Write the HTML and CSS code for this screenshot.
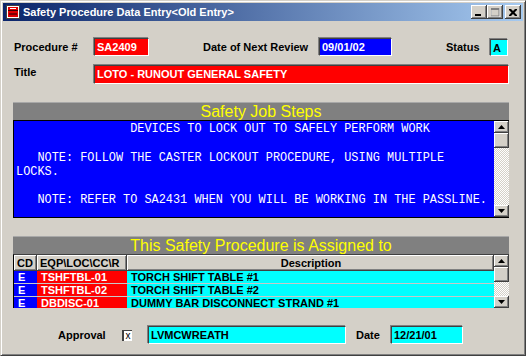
FILE: index.html
```html
<!DOCTYPE html>
<html lang="en">
<head>
  <meta charset="UTF-8">
  <title>Safety Procedure Data Entry</title>
  <link rel="stylesheet" href="styles.css">
</head>
<body>
  <div class="window">
    <div class="titlebar">
      <span class="app-icon">
        <svg width="14" height="14" viewBox="0 0 14 14">
          <rect x="0.5" y="0.5" width="13" height="13" fill="#fff" stroke="#404040"/>
          <rect x="2" y="2" width="10" height="10" fill="#e00000"/>
          <rect x="2" y="5" width="10" height="1" fill="#400000"/>
          <rect x="4" y="3" width="6" height="1" fill="#fff"/>
          <rect x="3" y="8" width="8" height="2" fill="#800000"/>
        </svg>
      </span>
      <span class="title">Safety Procedure Data Entry&lt;Old Entry&gt;</span>
      <div class="controls">
        <button class="ctl">
          <svg width="8" height="7" viewBox="0 0 8 7"><rect x="0" y="5" width="6" height="2" fill="#000"/></svg>
        </button>
        <button class="ctl disabled">
          <svg width="9" height="9" viewBox="0 0 9 9"><rect x="0.5" y="0.5" width="8" height="8" fill="none" stroke="#fff"/><rect x="0" y="0" width="8" height="8" fill="none" stroke="#808080"/><rect x="0" y="0" width="8" height="2" fill="#808080"/></svg>
        </button>
        <button class="ctl close">
          <svg width="8" height="7" viewBox="0 0 8 7"><path d="M0 0h2l2 2 2-2h2v1l-2.5 2.5 2.5 2.5v1h-2l-2-2-2 2h-2v-1l2.5-2.5-2.5-2.5z" fill="#000"/></svg>
        </button>
      </div>
    </div>

    <div class="client">
      <div class="row row-top">
        <span class="lbl lbl-proc">Procedure #</span>
        <div class="field red f-proc">SA2409</div>
        <span class="lbl lbl-date">Date of Next Review</span>
        <div class="field blue f-date">09/01/02</div>
        <span class="lbl lbl-status">Status</span>
        <div class="field cyan f-status">A</div>
      </div>

      <div class="row row-title">
        <span class="lbl lbl-proc">Title</span>
        <div class="field red f-title">LOTO - RUNOUT GENERAL SAFETY</div>
      </div>

      <div class="section">
        <div class="sec-head">Safety Job Steps</div>
        <div class="memo">
<pre class="memo-text">                DEVICES TO LOCK OUT TO SAFELY PERFORM WORK

   NOTE: FOLLOW THE CASTER LOCKOUT PROCEDURE, USING MULTIPLE
LOCKS.

   NOTE: REFER TO SA2431 WHEN YOU WILL BE WORKING IN THE PASSLINE.</pre>
          <div class="vscroll">
            <div class="sb-btn"><svg width="7" height="4" viewBox="0 0 7 4"><path d="M3.5 0L7 4H0z" fill="#000"/></svg></div>
            <div class="sb-thumb"></div>
            <div class="sb-track"></div>
            <div class="sb-btn"><svg width="7" height="4" viewBox="0 0 7 4"><path d="M0 0h7L3.5 4z" fill="#000"/></svg></div>
          </div>
        </div>
      </div>

      <div class="section section-list">
        <div class="sec-head">This Safety Procedure is Assigned to</div>
        <div class="list">
          <div class="grid">
            <div class="th">CD</div>
            <div class="th">EQP\LOC\CC\R</div>
            <div class="th th-center">Description</div>

            <div class="td c-cd">E</div>
            <div class="td c-eqp">TSHFTBL-01</div>
            <div class="td c-desc">TORCH SHIFT TABLE #1</div>

            <div class="td c-cd">E</div>
            <div class="td c-eqp">TSHFTBL-02</div>
            <div class="td c-desc">TORCH SHIFT TABLE #2</div>

            <div class="td c-cd">E</div>
            <div class="td c-eqp">DBDISC-01</div>
            <div class="td c-desc">DUMMY BAR DISCONNECT STRAND #1</div>
          </div>
          <div class="vscroll">
            <div class="sb-btn"><svg width="7" height="4" viewBox="0 0 7 4"><path d="M3.5 0L7 4H0z" fill="#000"/></svg></div>
            <div class="sb-thumb"></div>
            <div class="sb-track"></div>
            <div class="sb-btn"><svg width="7" height="4" viewBox="0 0 7 4"><path d="M0 0h7L3.5 4z" fill="#000"/></svg></div>
          </div>
        </div>
      </div>

      <div class="row row-approval">
        <span class="lbl lbl-approval">Approval</span>
        <span class="check">x</span>
        <div class="field cyan f-approver">LVMCWREATH</div>
        <span class="lbl lbl-adate">Date</span>
        <div class="field cyan f-adate">12/21/01</div>
      </div>
    </div>
  </div>
</body>
</html>
```

FILE: styles.css
```css
* {
  box-sizing: border-box;
}
body {
  margin: 0;
  background: #ffffff;
  font-family: "Liberation Sans", Arial, sans-serif;
  font-size: 11px;
}
.window {
  width: 526px;
  height: 356px;
  background: #d4d0c8;
  border: 1px solid;
  border-color: #d4d0c8 #404040 #404040 #d4d0c8;
  box-shadow: inset 1px 1px 0 #fff, inset -1px -1px 0 #808080;
  padding: 2px;
  display: flex;
  flex-direction: column;
}

/* title bar */
.titlebar {
  height: 18px;
  display: flex;
  align-items: center;
  background: linear-gradient(to right, #0a246a, #a6caf0);
  color: #fff;
  font-weight: bold;
  font-size: 11px;
  padding: 0 2px;
}
.app-icon {
  display: flex;
  width: 14px;
  height: 14px;
  margin-left: 1px;
}
.title {
  margin-left: 3px;
  flex: 1;
  white-space: nowrap;
}
.controls {
  display: flex;
  align-items: center;
}
.ctl {
  width: 16px;
  height: 14px;
  padding: 0;
  border: none;
  background: #d4d0c8;
  box-shadow: inset -1px -1px 0 #404040, inset 1px 1px 0 #fff, inset -2px -2px 0 #808080;
  display: flex;
  align-items: center;
  justify-content: center;
}
.ctl.close {
  margin-left: 2px;
}

/* client area */
.client {
  flex: 1;
  padding: 17px 14px 0 10px;
}
.row {
  display: flex;
  align-items: center;
}
.lbl {
  font-weight: bold;
  color: #000;
  white-space: nowrap;
}
.field {
  height: 18px;
  line-height: 16px;
  padding-left: 2px;
  font-weight: bold;
  white-space: nowrap;
  overflow: hidden;
  border: 1px solid;
  border-color: #404040 #fff #fff #404040;
  box-shadow: -1px -1px 0 #808080;
}
.red {
  background: #ff0000;
  color: #fff;
}
.blue {
  background: #0000ff;
  color: #fff;
}
.cyan {
  background: #00ffff;
  color: #000;
}
.lbl-proc {
  width: 81px;
  padding-left: 1px;
}
.f-proc {
  width: 55px;
}
.lbl-date {
  margin-left: 54px;
  width: 116px;
}
.f-date {
  width: 73px;
}
.lbl-status {
  margin-left: 54px;
  width: 44px;
}
.f-status {
  width: 18px;
  height: 17px;
}
.row-title {
  margin-top: 9px;
  align-items: flex-start;
}
.row-title .lbl {
  margin-top: 1px;
}
.f-title {
  width: 415px;
  height: 19px;
  line-height: 17px;
}

/* sections */
.section {
  width: 496px;
  margin-top: 18px;
}
.sec-head {
  height: 18px;
  background: #808080;
  color: #ffff00;
  font-size: 16px;
  text-align: center;
  border-top: 1px solid #a8a8a8;
  line-height: 17px;
}
.memo {
  display: flex;
  height: 98px;
  border: 1px solid #000;
  border-right: none;
}
.memo-text {
  flex: 1;
  margin: 0;
  padding: 1px 2px;
  background: #0000ff;
  color: #fff;
  font-family: "Liberation Mono", "Courier New", monospace;
  font-size: 11.9px;
  line-height: 14.3px;
  overflow: hidden;
}
.vscroll {
  width: 15px;
  display: flex;
  flex-direction: column;
  background-color: #eeece8;
  background-image: repeating-conic-gradient(#fff 0 25%, #d4d0c8 0 50%);
  background-size: 2px 2px;
}
.sb-btn,
.sb-thumb {
  height: 12px;
  background: #d4d0c8;
  box-shadow: inset -1px -1px 0 #404040, inset 1px 1px 0 #fff, inset -2px -2px 0 #808080;
  display: flex;
  align-items: center;
  justify-content: center;
}
.sb-thumb {
  height: 15px;
}
.sb-track {
  flex: 1;
}

/* list */
.list {
  display: flex;
  height: 54px;
  border-left: 1px solid #000;
  border-top: 1px solid #404040;
}
.grid {
  flex: 1;
  display: grid;
  grid-template-columns: 23px 90px 1fr;
  grid-template-rows: 16px 13px 13px 13px;
  overflow: hidden;
  font-weight: bold;
}
.th {
  background: #d4d0c8;
  box-shadow: inset -1px -1px 0 #404040, inset 1px 1px 0 #fff, inset -2px -2px 0 #808080;
  padding: 2px 2px 0 3px;
  white-space: nowrap;
  overflow: hidden;
}
.th-center {
  text-align: center;
}
.td {
  line-height: 12px;
  padding-left: 4px;
  border-bottom: 1px solid #c8c8c8;
  white-space: nowrap;
  overflow: hidden;
}
.c-cd {
  background: #0000ff;
  color: #fff;
}
.c-eqp {
  background: #ff0000;
  color: #fff;
}
.c-desc {
  background: #00ffff;
  color: #000;
}

/* approval */
.row-approval {
  margin-top: 18px;
}
.lbl-approval {
  margin-left: 45px;
  width: 64px;
}
.check {
  width: 10px;
  height: 11px;
  margin-right: 16px;
  background: #fff;
  border-left: 2px solid #404040;
  border-top: 1px solid #404040;
  font-size: 10px;
  line-height: 9px;
  text-align: center;
}
.f-approver {
  width: 198px;
}
.lbl-adate {
  margin-left: 10px;
  width: 35px;
}
.f-adate {
  width: 72px;
}
```
